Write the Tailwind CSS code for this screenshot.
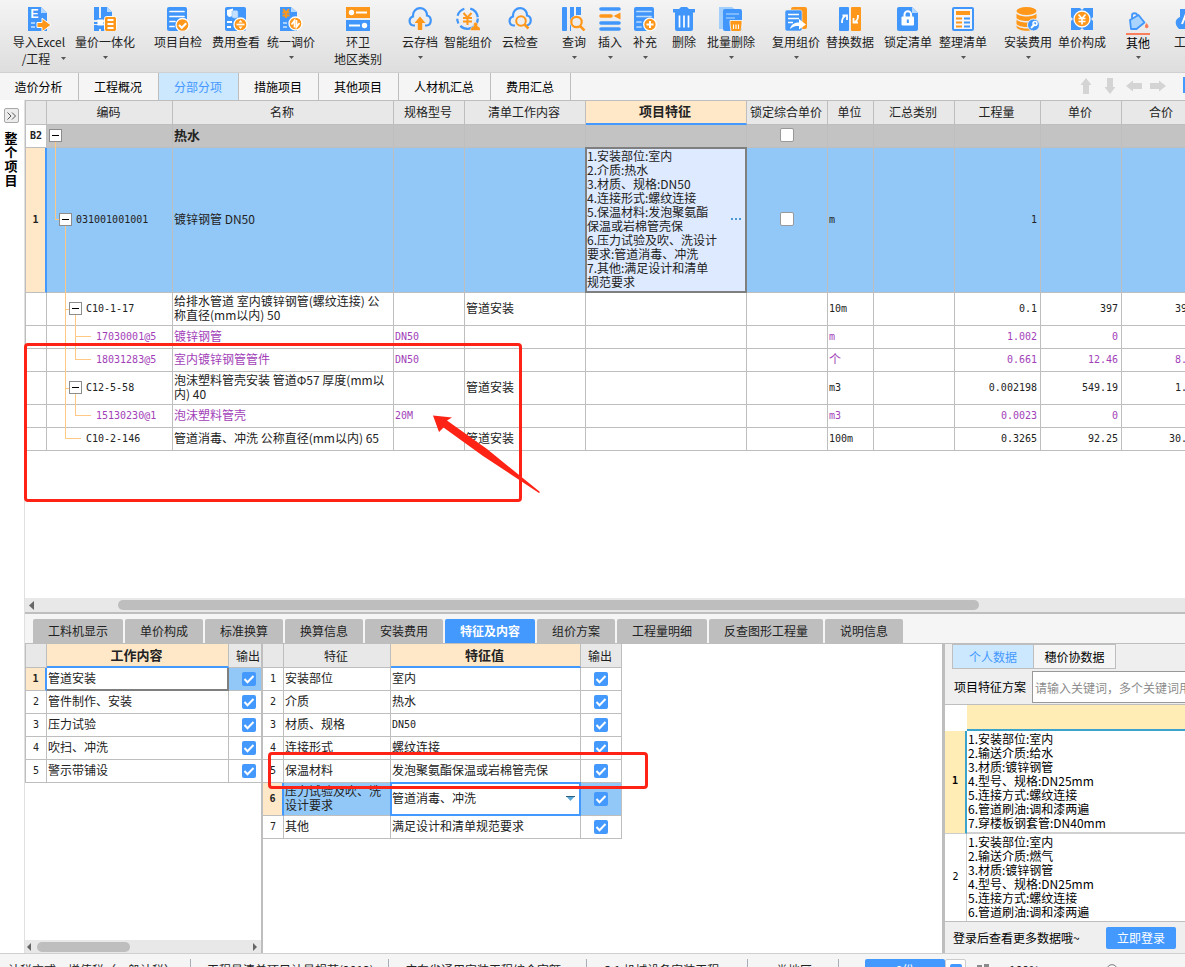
<!DOCTYPE html>
<html lang="zh-CN">
<head>
<meta charset="utf-8">
<title>分部分项</title>
<script src="https://cdn.jsdelivr.net/npm/@tailwindcss/browser@4"></script>
</head>
<body class="relative h-screen overflow-hidden bg-white font-['Noto_Sans_CJK_SC',sans-serif] text-xs leading-[14px] text-[#222]">

<svg class="hidden" aria-hidden="true">
  <symbol id="tick" viewBox="0 0 14 14"><path d="M2.500 7l3 3.200L11.500 4" fill="none" stroke="#fff" stroke-width="2"/></symbol>
  <symbol id="caret" viewBox="0 0 5 3"><path d="M0 0h5L2.500 3z" fill="#555"/></symbol>
</svg>

<div class="flex h-[calc(100vh+18px)] flex-col">

<!-- Ribbon -->
<header class="flex h-[72px] shrink-0 overflow-hidden bg-linear-to-b from-[#f4f4f4] to-[#dedede] pt-[7px] leading-[17px] whitespace-nowrap [&>button]:flex [&>button]:shrink-0 [&>button]:flex-col [&>button]:items-center [&>button]:justify-start [&_svg.ic]:mb-0.5 [&_svg.ic]:size-6 [&_svg.ic]:shrink-0 [&_svg.car]:mt-[6px] [&_svg.car]:h-[3px] [&_svg.car]:w-[5px]">
  <button class="relative ml-3 w-[54px]">
    <svg class="ic" viewBox="0 0 24 24"><path d="M1 0h13l6 6v18H1z" fill="#4096fa"/><path d="M14 0v6h6z" fill="#b5d9ff"/><text x="3.500" y="11" font-family="Liberation Sans" font-weight="700" font-size="12" fill="#fff">E</text><path d="M4 16h4M4 20h4" stroke="#a6d0ff" stroke-width="2"/><path d="M10 15.500h5v-4.300l9 6.800-9 6.800v-4.300h-5z" fill="#ff981a" stroke="#fff" stroke-width="1"/></svg>
    <span>导入Excel</span><span class="pr-1.5">/工程</span>
    <svg class="absolute right-0 bottom-[12px] h-[3px] w-[5px]"><use href="#caret"/></svg>
  </button>
  <button class="ml-[9px] w-[60px]">
    <svg class="ic" viewBox="0 0 24 24"><path d="M1 0h5v13H1zM1 18h5v6H1zM8 0h6l5 5v8H8zM8 18h5v6H8z" fill="#4096fa"/><path d="M14 0v5h5z" fill="#b5d9ff"/><path d="M1 16h12M7 11v11" stroke="#4096fa" stroke-width="2"/><path d="M4.500 12.500h6v6h-6z" fill="#fff"/><rect x="11.500" y="9.500" width="12" height="15" rx="2" fill="#ff981a" stroke="#fff"/><path d="M14.500 13h6M14.500 17h6M14.500 21h6" stroke="#fff" stroke-width="1.800"/></svg>
    <span>量价一体化</span><svg class="car"><use href="#caret"/></svg>
  </button>
  <button class="ml-[19px] w-12">
    <svg class="ic" viewBox="0 0 24 24"><rect x="1" width="20" height="24" rx="2" fill="#4096fa"/><path d="M4 4.500h14M4 9.500h14M4 14.500h5M4 19.500h4" stroke="#fff" stroke-width="1.700" stroke-linecap="round"/><circle cx="16.500" cy="18" r="6.500" fill="#ff981a" stroke="#fff" stroke-width="1.300"/><path d="M13 18l2.800 2.800 4.400-4.600" fill="none" stroke="#fff" stroke-width="2"/></svg>
    <span>项目自检</span>
  </button>
  <button class="ml-2.5 w-12">
    <svg class="ic" viewBox="0 0 24 24"><rect x="1" width="21" height="24" rx="2" fill="#4096fa"/><path d="M3 3l6-1.500V9L5 10 3 8z" fill="#fff"/><path d="M8 4.500c0-1.500 6-1.500 6 0V10c0 1.500-6 1.500-6 0z" fill="#c6e1ff" stroke="#7db8fc" stroke-width=".6"/><path d="M3 15h5M3 20h4" stroke="#fff" stroke-width="2"/><circle cx="16.500" cy="17.500" r="6.500" fill="#ff981a" stroke="#fff" stroke-width="1.300"/><path d="M12.500 17.500h8" stroke="#fff" stroke-width="1.700"/><path d="M14.500 15.500l2-2.500 2 2.500zM14.500 19.500l2 2.500 2-2.500z" fill="#fff"/></svg>
    <span>费用查看</span>
  </button>
  <button class="ml-[7px] w-12">
    <svg class="ic" viewBox="0 0 24 24"><path d="M1 0h11l6 5v19H1z" fill="#4096fa"/><path d="M12 0v5h6z" fill="#b5d9ff"/><path d="M4 2l3 3.500L10 2M7 5v6M3.500 5.500h7M3.500 8.500h7" fill="none" stroke="#ff981a" stroke-width="1.800"/><path d="M4 16h4M4 20h4" stroke="#a6d0ff" stroke-width="2"/><circle cx="16.500" cy="16.500" r="6.500" fill="#ff981a" stroke="#fff" stroke-width="1.300"/><path d="M12.500 17.500l3-4v7M20.500 16l-3 4v-7" fill="none" stroke="#fff" stroke-width="1.700"/></svg>
    <span>统一调价</span><svg class="car"><use href="#caret"/></svg>
  </button>
  <button class="ml-[19px] w-12">
    <svg class="ic" viewBox="0 0 24 24"><path d="M0 0h24v11H0z" fill="#ff981a"/><path d="M0 13h24v11H0z" fill="#4096fa"/><circle cx="5.500" cy="5.500" r="2.700" fill="#fff"/><path d="M10 5.500h11M3 18.500h11" stroke="#fff" stroke-width="2"/><circle cx="18.500" cy="18.500" r="2.700" fill="#fff"/></svg>
    <span>环卫</span><span>地区类别</span>
  </button>
  <button class="ml-5 w-9">
    <svg class="ic" viewBox="0 0 24 24"><path d="M7 18.500H5.500A4.600 4.600 0 0 1 5 9.500C4.500 4 8.500 1 12.500 1.200c4 .2 6.800 3.300 6.500 7.300 5.200 1 5 9.500-.5 10H17" fill="none" stroke="#4096fa" stroke-width="2.200"/><path d="M12 9.500l5.500 6.500h-3.300v7H9.800v-7H6.500z" fill="#ff981a"/></svg>
    <span>云存档</span><svg class="car"><use href="#caret"/></svg>
  </button>
  <button class="ml-1.5 w-12">
    <svg class="ic" viewBox="0 0 24 24"><circle cx="11.500" cy="11.500" r="10.300" fill="none" stroke="#4096fa" stroke-width="2.200" stroke-dasharray="24 3 5 3 10 6 12 2"/><path d="M7.500 6l4 4.500 4-4.500M11.500 10v8M7 11h9M7 14.500h9" fill="none" stroke="#ff981a" stroke-width="2"/><path d="M14.500 23.500c0-4 2.500-3.500 3.500-4.500-2-5 5-5 3.500 0 1 1 3 .5 3 4.500z" fill="#ff981a" stroke="#eee" stroke-width=".5"/></svg>
    <span>智能组价</span>
  </button>
  <button class="ml-2.5 w-9">
    <svg class="ic" viewBox="0 0 24 24"><path d="M7 18.500H5.500A4.600 4.600 0 0 1 5 9.500C4.500 4 8.500 1 12.500 1.200c4 .2 6.800 3.300 6.500 7.300 5.200 1 5 9-.5 10" fill="none" stroke="#4096fa" stroke-width="2.200"/><circle cx="13" cy="14" r="4.800" fill="none" stroke="#ff981a" stroke-width="2"/><path d="M16.500 17.500l4 4" stroke="#ff981a" stroke-width="2.500"/></svg>
    <span>云检查</span>
  </button>
  <button class="ml-6 w-6">
    <svg class="ic" viewBox="0 0 24 24"><rect width="5" height="24" rx="1" fill="#4096fa"/><path d="M8 0h4v11H8zM14 0h5v8h-5z" fill="#4096fa"/><path d="M8 11h1v13H8z" fill="#4096fa"/><circle cx="14.500" cy="15" r="6.600" fill="#ececec"/><circle cx="14.500" cy="15" r="5.200" fill="none" stroke="#ff981a" stroke-width="2.200"/><path d="M18 19l4.500 4.500" stroke="#ff981a" stroke-width="2.500"/></svg>
    <span>查询</span><svg class="car"><use href="#caret"/></svg>
  </button>
  <button class="ml-3 w-6">
    <svg class="ic" viewBox="0 0 24 24"><path d="M3 2h18M3 16h18M3 22h18" stroke="#4096fa" stroke-width="3.600" stroke-linecap="round"/><path d="M3 9h10" stroke="#ff981a" stroke-width="3.600" stroke-linecap="round"/><path d="M22.500 5.500v7L15.500 9z" fill="#ff981a"/></svg>
    <span>插入</span><svg class="car"><use href="#caret"/></svg>
  </button>
  <button class="ml-[11px] w-6">
    <svg class="ic" viewBox="0 0 24 24"><rect x="1" width="20" height="24" rx="2" fill="#4096fa"/><path d="M4 4.500h14M4 9.500h14M4 15h4M4 20h4" stroke="#b9dcff" stroke-width="1.700" stroke-linecap="round"/><circle cx="17" cy="17.500" r="6.300" fill="#ff981a" stroke="#fff" stroke-width="1.300"/><path d="M13.500 17.500h7M17 14v7" stroke="#fff" stroke-width="2"/></svg>
    <span>补充</span><svg class="car"><use href="#caret"/></svg>
  </button>
  <button class="ml-[15px] w-6">
    <svg class="ic" viewBox="0 0 24 24"><path d="M1 2h6l2-2h6l2 2h6v3.500H1zM3 5h18v17a2 2 0 0 1-2 2H5a2 2 0 0 1-2-2z" fill="#4096fa"/><path d="M7.500 8.500v12M12 8.500v12M16.500 8.500v12" stroke="#fff" stroke-width="1.700"/></svg>
    <span>删除</span>
  </button>
  <button class="ml-[11px] w-12">
    <svg class="ic" viewBox="0 0 24 24"><path d="M0 0h13l4 3v19H0z" fill="#a3cffd"/><rect x="4" y="2" width="19" height="22" rx="2" fill="#4096fa"/><path d="M7 7h13M7 11h9" stroke="#b9dcff" stroke-width="1.200"/><path d="M11 13.500h12v3l-1 8H12l-1-8z" fill="#ff981a" stroke="#fff" stroke-width=".8"/><path d="M14.500 17.500v4.500M17 17.500v4.500M19.500 17.500v4.500" stroke="#fff" stroke-width="1.100"/></svg>
    <span>批量删除</span><svg class="car"><use href="#caret"/></svg>
  </button>
  <button class="ml-[17px] w-12">
    <svg class="ic" viewBox="0 0 24 24"><rect x="7" width="16" height="22" rx="2" fill="#ff981a"/><rect x="1" y="3" width="17" height="21" rx="2" fill="#4096fa" stroke="#eee" stroke-width=".6"/><path d="M4 7.500h11M4 11.500h11M4 15.500h5" stroke="#fff" stroke-width="1.300"/><path d="M6 22c1-5 5-6.500 9-6.500V12l7 5.500-7 5V19c-4 0-6 .5-9 3z" fill="#fff"/></svg>
    <span>复用组价</span><svg class="car"><use href="#caret"/></svg>
  </button>
  <button class="ml-1.5 w-12">
    <svg class="ic" viewBox="0 0 24 24"><rect x="1" width="10" height="24" rx="1" fill="#4096fa"/><rect x="13" width="10" height="24" rx="1" fill="#ff981a"/><path d="M4 16c0-4 .5-5 3-7M4.500 8.500H9v4.500M20 8c0 4-.5 5-3 7M20 15.500h-4.500V11" fill="none" stroke="#fff" stroke-width="1.800"/></svg>
    <span>替换数据</span>
  </button>
  <button class="ml-2.5 w-12">
    <svg class="ic" viewBox="0 0 24 24"><path d="M3 0h13l6 6v16a2 2 0 0 1-2 2H3a2 2 0 0 1-2-2V2a2 2 0 0 1 2-2z" fill="#4096fa"/><path d="M16 0v6h6z" fill="#b5d9ff"/><rect x="5.500" y="9.500" width="12.500" height="9" rx="1" fill="#fff"/><path d="M8.500 10V7.500a3.300 3.300 0 0 1 6.600 0V10" fill="none" stroke="#fff" stroke-width="2"/><path d="M11.800 12.500v3.500" stroke="#4096fa" stroke-width="2"/></svg>
    <span>锁定清单</span>
  </button>
  <button class="ml-[7px] w-12">
    <svg class="ic" viewBox="0 0 24 24"><rect x="2" y="1" width="20" height="22" rx="1" fill="#f6f6f6" stroke="#4096fa" stroke-width="2"/><path d="M5 4h14v4H5z" fill="#ff981a"/><path d="M5 11.500h6M5 15.500h6M5 19.500h6" stroke="#ff981a" stroke-width="2"/><path d="M13 11.500h6M13 15.500h6M13 19.500h6" stroke="#4096fa" stroke-width="2"/></svg>
    <span>整理清单</span><svg class="car"><use href="#caret"/></svg>
  </button>
  <button class="ml-[17px] w-12">
    <svg class="ic" viewBox="0 0 24 24"><ellipse cx="10.500" cy="4" rx="10" ry="4" fill="#ff981a"/><path d="M.5 6.500c3 4 17 4 20 0V11c-3 4-17 4-20 0zM.5 12.500c3 4 17 4 20 0V17c-3 4-17 4-20 0zM.5 18.500c3 4 17 4 20 0V20c-2 5-18 5-20 0z" fill="#ff981a"/><circle cx="17.500" cy="18" r="6" fill="#4096fa" stroke="#eee"/><path d="M15 21l4-4" stroke="#fff" stroke-width="2"/><circle cx="19" cy="16.500" r="2" fill="none" stroke="#fff" stroke-width="1.500"/></svg>
    <span>安装费用</span><svg class="car"><use href="#caret"/></svg>
  </button>
  <button class="ml-1.5 w-12">
    <svg class="ic" viewBox="0 0 24 24"><path d="M1 1h9l2 2 2-2h9v9l-2 2 2 2v9h-9l-2-2-2 2H1v-9l2-2-2-2z" fill="#4096fa"/><circle cx="12" cy="12" r="8" fill="#ff981a" stroke="#fff" stroke-width="1.300"/><path d="M8.500 7.500l3.500 4 3.500-4M12 11.500v6M8.500 11.500h7M8.500 14.500h7" fill="none" stroke="#fff" stroke-width="1.600"/></svg>
    <span>单价构成</span>
  </button>
  <button class="ml-5 w-6 text-black">
    <svg class="ic" viewBox="0 0 24 24"><path d="M4 13l8.500-5 6 7.500-8 6.500H5z" fill="#a9d4ff" stroke="#4096fa" stroke-width="1.800" stroke-linejoin="round"/><path d="M6 11V8.500c0-3 5-3 5 0" fill="none" stroke="#4096fa" stroke-width="1.800"/><path d="M20.500 16c1 1.500 2 2.300 2 3.500a1.800 1.800 0 0 1-3.600 0c0-1.200.8-2 1.600-3.500z" fill="#fa7f5c"/></svg>
    <span class="border-t-2 border-[#fa7f5c] leading-[15px]">其他</span><svg class="car"><use href="#caret"/></svg>
  </button>
  <button class="ml-6 w-6">
    <svg class="ic" viewBox="0 0 24 24"><path d="M6 2h16v20H5c-5-5-4-10 1-12z" fill="#4096fa"/><path d="M8 17l4-10" stroke="#fff" stroke-width="2"/></svg>
    <span>工具</span>
  </button>
</header>

<!-- Page tabs -->
<nav class="flex h-7 shrink-0 items-stretch border-t border-[#d0d0d0] bg-[#f5f5f5] text-black [&>button]:border-r [&>button]:border-[#bebebe] [&>button]:pr-px">
  <button class="w-[79px]">造价分析</button>
  <button class="w-20">工程概况</button>
  <button class="w-20 bg-[#cce8ff] text-[#4499ff]">分部分项</button>
  <button class="w-20">措施项目</button>
  <button class="w-20">其他项目</button>
  <button class="w-[92px]">人材机汇总</button>
  <button class="w-20">费用汇总</button>
  <div class="ml-auto flex items-center gap-2 pr-px pb-0.5 text-[#d4d4d4] [&_svg]:size-4">
    <a href="#" aria-label="上移"><svg viewBox="0 0 16 16"><path d="M8 0l5.500 7H11v9H5V7H2.500z" fill="currentColor"/></svg></a>
    <a href="#" aria-label="下移"><svg viewBox="0 0 16 16"><path d="M8 16l5.500-7H11V0H5v9H2.500z" fill="currentColor"/></svg></a>
    <a href="#" aria-label="左移"><svg viewBox="0 0 16 16"><path d="M0 8l7-5.500V5h9v6H7v2.500z" fill="currentColor"/></svg></a>
    <a href="#" aria-label="右移"><svg viewBox="0 0 16 16"><path d="M16 8L9 2.500V5H0v6h9v2.500z" fill="currentColor"/></svg></a>
  </div>
  <div class="mt-1 ml-4 h-4 w-0.5 bg-[#4499ff]"></div>
</nav>

<main class="flex min-h-0 flex-1">
  <!-- Collapsed project tree -->
  <aside class="flex w-[25px] shrink-0 flex-col items-center border-r border-[#e0e0e0] pt-2 pr-0.5 text-black">
    <button aria-label="展开" class="grid size-[15px] place-items-center rounded-xs border border-[#a8a8a8] bg-[#ececec]"><svg class="h-2 w-[9px]" viewBox="0 0 9 8"><path d="M.5.5L4 4 .5 7.500M5 .5L8.500 4 5 7.500" fill="none" stroke="#555"/></svg></button>
    <div class="mt-2 w-[13px] text-[13px] leading-[14px] font-bold break-all">整个项目</div>
  </aside>

  <div class="flex min-w-0 flex-1 flex-col">
    <div class="min-h-0 flex-1 overflow-hidden">
      <table class="w-[1178px] table-fixed border-separate border-spacing-0 [&_.num]:pr-[3px] [&_.num]:pb-0 [&_.num]:text-right [&_.num]:font-['DejaVu_Sans_Mono',monospace] [&_.num]:text-[10px] [&_.code]:font-['DejaVu_Sans_Mono',monospace] [&_.code]:text-[10px] [&_td]:border-r [&_td]:border-b [&_td]:border-[#bebebe] [&_td]:p-0 [&_td]:pb-0.5 [&_td]:pl-px [&_td:first-child]:border-l [&_td:first-child]:pl-0 [&_td:first-child]:text-center [&_th]:border-t [&_th]:border-r [&_th]:border-b [&_th]:border-[#bebebe] [&_th]:p-0 [&_th]:pr-0.5 [&_th]:pb-0.5 [&_th]:font-normal [&_th:first-child]:border-l [&_i]:absolute [&_i]:border-[#ffc983] [&_td>button]:absolute [&_td>button]:size-[13px] [&_td>button]:border [&_td>button]:border-[#8c8c8c] [&_td>button]:bg-white [&_td>button]:bg-linear-to-b [&_td>button]:from-black [&_td>button]:to-black [&_td>button]:bg-[length:7px_1px] [&_td>button]:bg-center [&_td>button]:bg-no-repeat [&_td>button]:top-[calc(50%-7px)]">
        <colgroup><col class="w-[22px]"><col class="w-[126px]"><col class="w-[221px]"><col class="w-[71px]"><col class="w-[121px]"><col class="w-[161px]"><col class="w-[81px]"><col class="w-[46px]"><col class="w-[81px]"><col class="w-[86px]"><col class="w-[81px]"><col class="w-[81px]"></colgroup>
        <thead>
          <tr class="h-[25px] bg-[#e8e8e8]"><th></th><th>编码</th><th>名称</th><th>规格型号</th><th>清单工作内容</th><th class="border-b-2! border-b-[#4499ff]! bg-[#ffe8c8]"><span class="text-[13px] font-bold">项目特征</span></th><th class="whitespace-nowrap">锁定综合单价</th><th>单位</th><th>汇总类别</th><th>工程量</th><th>单价</th><th>合价</th></tr>
        </thead>
        <tbody>
          <tr class="h-[23px] bg-[#c3c3c3]">
            <td class="bg-white"><b class="code">B2</b></td>
            <td class="relative"><i class="top-1/2 -bottom-px left-2 border-l"></i><button aria-label="折叠" class="left-0.5"></button></td>
            <td class="text-[13px] font-bold">热水</td><td></td><td></td><td></td>
            <td class="pr-0.5!"><input type="checkbox" aria-label="锁定综合单价 B2" class="mx-auto block size-[14px] appearance-none rounded-xs border border-[#999] bg-white"></td>
            <td></td><td></td><td></td><td></td><td></td>
          </tr>
          <tr class="h-[145px] bg-[#92c8f7]">
            <td class="border-r-2! border-r-[#4499ff]! bg-[#ffe8c8]"><b class="code">1</b></td>
            <td class="relative"><i class="-top-px left-2 h-[73px] w-1 border-b border-l"></i><i class="top-1/2 -bottom-px left-[18px] border-l"></i><button aria-label="折叠" class="left-3"></button><span class="code pl-7">031001001001</span></td>
            <td>镀锌钢管 DN50</td><td></td><td></td>
            <td class="relative">
              <div class="absolute -inset-px flex items-center border-2 border-[#7f7f7f] bg-[#deeaff] pb-0.5">
                <div class="flex-1 whitespace-nowrap">1.安装部位:室内<br>2.介质:热水<br>3.材质、规格:DN50<br>4.连接形式:螺纹连接<br>5.保温材料:发泡聚氨酯<br>保温或岩棉管壳保<br>6.压力试验及吹、洗设计<br>要求:管道消毒、冲洗<br>7.其他:满足设计和清单<br>规范要求</div>
                <button aria-label="编辑" class="flex w-[14px] gap-0.5"><span class="size-0.5 bg-[#4c97d8]"></span><span class="size-0.5 bg-[#4c97d8]"></span><span class="size-0.5 bg-[#4c97d8]"></span></button>
              </div>
            </td>
            <td class="pr-0.5!"><input type="checkbox" aria-label="锁定综合单价 1" class="mx-auto block size-[14px] appearance-none rounded-xs border border-[#999] bg-white"></td>
            <td><span class="code">m</span></td><td></td><td class="num">1</td><td></td><td></td>
          </tr>
          <tr class="h-[33px]">
            <td></td>
            <td class="relative"><i class="-top-px -bottom-px left-[18px] border-l"></i><i class="top-1/2 left-[18px] w-1 border-t"></i><i class="top-1/2 -bottom-px left-7 border-l"></i><button aria-label="折叠" class="left-[22px]"></button><span class="code pl-[38px]">C10-1-17</span></td>
            <td>给排水管道 室内镀锌钢管(螺纹连接) 公<br>称直径(mm以内) 50</td><td></td><td>管道安装</td><td></td><td></td><td><span class="code">10m</span></td><td></td><td class="num">0.1</td><td class="num">397</td><td class="num">39.7</td>
          </tr>
          <tr class="h-[23px] text-[#a23fb8]">
            <td></td>
            <td class="relative"><i class="-top-px -bottom-px left-[18px] border-l"></i><i class="-top-px -bottom-px left-7 border-l"></i><i class="top-[10px] left-7 w-4 border-t"></i><span class="code pl-12">17030001@5</span></td>
            <td>镀锌钢管</td><td><span class="code">DN50</span></td><td></td><td></td><td></td><td><span class="code">m</span></td><td></td><td class="num">1.002</td><td class="num">0</td><td class="num">0</td>
          </tr>
          <tr class="h-[23px] text-[#a23fb8]">
            <td></td>
            <td class="relative"><i class="-top-px -bottom-px left-[18px] border-l"></i><i class="-top-px left-7 h-3 w-4 border-b border-l"></i><span class="code pl-12">18031283@5</span></td>
            <td>室内镀锌钢管管件</td><td><span class="code">DN50</span></td><td></td><td></td><td></td><td>个</td><td></td><td class="num">0.661</td><td class="num">12.46</td><td class="num">8.24</td>
          </tr>
          <tr class="h-[33px]">
            <td></td>
            <td class="relative"><i class="-top-px -bottom-px left-[18px] border-l"></i><i class="top-1/2 left-[18px] w-1 border-t"></i><i class="top-1/2 -bottom-px left-7 border-l"></i><button aria-label="折叠" class="left-[22px]"></button><span class="code pl-[38px]">C12-5-58</span></td>
            <td>泡沫塑料管壳安装 管道Φ57 厚度(mm以<br>内) 40</td><td></td><td>管道安装</td><td></td><td></td><td><span class="code">m3</span></td><td></td><td class="num">0.002198</td><td class="num">549.19</td><td class="num">1.21</td>
          </tr>
          <tr class="h-[23px] text-[#a23fb8]">
            <td></td>
            <td class="relative"><i class="-top-px -bottom-px left-[18px] border-l"></i><i class="-top-px left-7 h-3 w-4 border-b border-l"></i><span class="code pl-12">15130230@1</span></td>
            <td>泡沫塑料管壳</td><td><span class="code">20M</span></td><td></td><td></td><td></td><td><span class="code">m3</span></td><td></td><td class="num">0.0023</td><td class="num">0</td><td class="num">0</td>
          </tr>
          <tr class="h-[23px]">
            <td></td>
            <td class="relative"><i class="-top-px left-[18px] h-3 w-4 border-b border-l"></i><span class="code pl-[38px]">C10-2-146</span></td>
            <td>管道消毒、冲洗 公称直径(mm以内) 65</td><td></td><td>管道安装</td><td></td><td></td><td><span class="code">100m</span></td><td></td><td class="num">0.3265</td><td class="num">92.25</td><td class="num">30.12</td>
          </tr>
        </tbody>
      </table>
    </div>

    <!-- Horizontal scrollbar -->
    <div class="flex h-[14px] shrink-0 items-center bg-[#e8e8e8] pl-1">
      <svg class="h-[9px] w-[5px]" viewBox="0 0 5 9"><path d="M5 0v9L0 4.500z" fill="#666"/></svg>
      <div class="ml-[84px] h-2.5 w-[861px] rounded-full bg-[#bebebe]"></div>
    </div>

    <section class="flex h-[341px] shrink-0 flex-col border-t-2 border-[#bebebe]">
      <nav class="flex h-[30px] shrink-0 items-end gap-0.5 border-b border-[#bebebe] bg-[#f5f5f5] pl-2 [&>button]:h-6 [&>button]:w-[78px] [&>button]:rounded-t-xs [&>button]:bg-[#bebebe]">
        <button class="w-[90px]!">工料机显示</button>
        <button>单价构成</button>
        <button>标准换算</button>
        <button>换算信息</button>
        <button>安装费用</button>
        <button class="w-[90px]! bg-[#4499ff]! font-bold text-white">特征及内容</button>
        <button>组价方案</button>
        <button class="w-[90px]!">工程量明细</button>
        <button class="w-[114px]!">反查图形工程量</button>
        <button>说明信息</button>
      </nav>

      <div class="flex min-h-0 flex-1">
        <!-- Work items -->
        <div class="flex w-[236px] shrink-0 flex-col justify-between overflow-hidden">
          <table class="w-[245px] table-fixed border-separate border-spacing-0 [&_td]:border-r [&_td]:border-b [&_td]:border-[#bebebe] [&_td]:p-0 [&_td]:pb-0.5 [&_td]:pl-px [&_td:first-child]:border-l [&_td:first-child]:pb-0 [&_td:first-child]:pl-0 [&_td:first-child]:text-center [&_td:first-child]:font-['DejaVu_Sans_Mono',monospace] [&_td:first-child]:text-[10px] [&_td:last-child]:pr-0.5 [&_td:last-child]:pb-0 [&_th]:border-r [&_th]:border-b [&_th]:border-[#bebebe] [&_th]:p-0 [&_th]:pr-0.5 [&_th]:font-normal [&_th:first-child]:border-l [&_input]:block [&_input]:size-[14px] [&_input]:appearance-none [&_input]:rounded-xs [&_input]:bg-[#4499ff] [&_label]:relative [&_label]:mx-auto [&_label]:block [&_label]:w-[14px] [&_svg]:absolute [&_svg]:inset-0 [&_svg]:size-[14px]">
            <colgroup><col class="w-[22px]"><col class="w-[182px]"><col class="w-[41px]"></colgroup>
            <tr class="h-6 bg-[#e8e8e8]"><th></th><th class="border-b-2! border-b-[#4499ff]! bg-[#ffe8c8]"><span class="text-[13px] font-bold">工作内容</span></th><th>输出</th></tr>
            <tr class="h-[23px]"><td class="border-r-2! border-r-[#4499ff]! bg-[#ffe8c8] font-bold">1</td><td class="border-r-2! border-b-2! border-[#7f7f7f]! pb-px!">管道安装</td><td class="bg-[#92c8f7]"><label><input type="checkbox" checked aria-label="输出 管道安装"><svg><use href="#tick"/></svg></label></td></tr>
            <tr class="h-[23px]"><td>2</td><td>管件制作、安装</td><td><label><input type="checkbox" checked aria-label="输出 管件制作、安装"><svg><use href="#tick"/></svg></label></td></tr>
            <tr class="h-[23px]"><td>3</td><td>压力试验</td><td><label><input type="checkbox" checked aria-label="输出 压力试验"><svg><use href="#tick"/></svg></label></td></tr>
            <tr class="h-[23px]"><td>4</td><td>吹扫、冲洗</td><td><label><input type="checkbox" checked aria-label="输出 吹扫、冲洗"><svg><use href="#tick"/></svg></label></td></tr>
            <tr class="h-[23px]"><td>5</td><td>警示带铺设</td><td><label><input type="checkbox" checked aria-label="输出 警示带铺设"><svg><use href="#tick"/></svg></label></td></tr>
          </table>
          <div class="flex h-[13px] items-center bg-[#e8e8e8] pr-1 pl-0.5">
            <svg class="h-2 w-1" viewBox="0 0 4 8"><path d="M4 0v8L0 4z" fill="#666"/></svg>
            <div class="ml-1.5 h-2.5 w-[93px] rounded-full bg-[#bebebe]"></div>
            <svg class="ml-auto h-2 w-1" viewBox="0 0 4 8"><path d="M0 0v8l4-4z" fill="#666"/></svg>
          </div>
        </div>

        <!-- Characteristic values -->
        <div class="min-w-0 flex-1 overflow-hidden border-l-2 border-[#bebebe]">
          <table class="w-[359px] table-fixed border-separate border-spacing-0 [&_td]:border-r [&_td]:border-b [&_td]:border-[#bebebe] [&_td]:p-0 [&_td]:pb-0.5 [&_td]:pl-px [&_td:first-child]:pb-0 [&_td:first-child]:pl-0 [&_td:first-child]:text-center [&_td:first-child]:font-['DejaVu_Sans_Mono',monospace] [&_td:first-child]:text-[10px] [&_td:last-child]:pr-0.5 [&_td:last-child]:pb-0 [&_th]:border-r [&_th]:border-b [&_th]:border-[#bebebe] [&_th]:p-0 [&_th]:pr-0.5 [&_th]:font-normal [&_input]:block [&_input]:size-[14px] [&_input]:appearance-none [&_input]:rounded-xs [&_input]:bg-[#4499ff] [&_label]:relative [&_label]:mx-auto [&_label]:block [&_label]:w-[14px] [&_label>svg]:absolute [&_label>svg]:inset-0 [&_label>svg]:size-[14px]">
            <colgroup><col class="w-[21px]"><col class="w-[107px]"><col class="w-[190px]"><col class="w-[41px]"></colgroup>
            <tr class="h-6 bg-[#e8e8e8]"><th></th><th>特征</th><th class="border-b-2! border-b-[#4499ff]! bg-[#ffe8c8]"><span class="text-[13px] font-bold">特征值</span></th><th>输出</th></tr>
            <tr class="h-[23px]"><td>1</td><td>安装部位</td><td>室内</td><td><label><input type="checkbox" checked aria-label="输出 安装部位"><svg><use href="#tick"/></svg></label></td></tr>
            <tr class="h-[23px]"><td>2</td><td>介质</td><td>热水</td><td><label><input type="checkbox" checked aria-label="输出 介质"><svg><use href="#tick"/></svg></label></td></tr>
            <tr class="h-[23px]"><td>3</td><td>材质、规格</td><td><span class="font-['DejaVu_Sans_Mono',monospace] text-[10px]">DN50</span></td><td><label><input type="checkbox" checked aria-label="输出 材质、规格"><svg><use href="#tick"/></svg></label></td></tr>
            <tr class="h-[23px]"><td>4</td><td>连接形式</td><td>螺纹连接</td><td><label><input type="checkbox" checked aria-label="输出 连接形式"><svg><use href="#tick"/></svg></label></td></tr>
            <tr class="h-[23px]"><td>5</td><td>保温材料</td><td>发泡聚氨酯保温或岩棉管壳保</td><td><label><input type="checkbox" checked aria-label="输出 保温材料"><svg><use href="#tick"/></svg></label></td></tr>
            <tr class="h-[33px]"><td class="border-r-2! border-r-[#4499ff]! bg-[#ffe8c8] font-bold">6</td><td class="bg-[#92c8f7]">压力试验及吹、洗<br>设计要求</td>
              <td class="relative"><div class="absolute -inset-px border-2 border-[#4499ff] bg-white"><select aria-label="压力试验及吹、洗设计要求" class="block size-full appearance-none bg-transparent pb-0.5"><option>管道消毒、冲洗</option></select><svg class="pointer-events-none absolute top-3 right-1 h-[5px] w-[9px]" viewBox="0 0 9 5"><path d="M0 0h9L4.500 5z" fill="#5ba7d8"/><path d="M0 .5h9" stroke="#27607f"/></svg></div></td>
              <td class="bg-[#92c8f7]"><label><input type="checkbox" checked aria-label="输出 压力试验及吹、洗设计要求"><svg><use href="#tick"/></svg></label></td></tr>
            <tr class="h-[23px]"><td>7</td><td>其他</td><td>满足设计和清单规范要求</td><td><label><input type="checkbox" checked aria-label="输出 其他"><svg><use href="#tick"/></svg></label></td></tr>
          </table>
        </div>

        <!-- Data panel -->
        <aside class="flex w-[243px] shrink-0 flex-col overflow-hidden border-l-3 border-[#bebebe] bg-[#efefef] text-black">
          <div class="flex pl-[7px] [&>button]:h-[25px] [&>button]:w-[82px] [&>button]:border [&>button]:border-[#bebebe]">
            <button class="bg-[#cce8ff] text-[#4499ff]">个人数据</button>
            <button class="border-l-0! bg-[#f5f5f5]">穗价协数据</button>
          </div>
          <div class="flex items-center gap-[6px] pt-0.5 pb-px pl-[9px] whitespace-nowrap">
            <label for="kw" class="shrink-0">项目特征方案</label>
            <input id="kw" type="text" placeholder="请输入关键词，多个关键词用空格隔开" class="h-8 w-[220px] shrink-0 border border-[#999] bg-white pl-0.5 placeholder:text-[#8c8c8c]">
          </div>
          <div class="min-h-0 flex-1 overflow-hidden border-y border-[#bebebe] bg-white">
            <table class="w-[300px] table-fixed border-separate border-spacing-0 [&_td]:p-0 [&_td]:pb-0.5 [&_th]:p-0">
              <colgroup><col class="w-[22px]"><col></colgroup>
              <tr class="h-[26px]"><th></th><th class="border-b-2 border-[#3ba3cc] bg-[#ffedb5]"></th></tr>
              <tr class="h-[103px]"><td class="border-r-2 border-b border-r-[#3ba3cc] border-b-[#ccc] bg-[#ffedb5] text-center font-['DejaVu_Sans_Mono',monospace] text-[10px] font-bold">1</td><td class="border-b-2 border-[#d0d0d0] pl-px!">1.安装部位:室内<br>2.输送介质:给水<br>3.材质:镀锌钢管<br>4.型号、规格:DN25mm<br>5.连接方式:螺纹连接<br>6.管道刷油:调和漆两遍<br>7.穿楼板钢套管:DN40mm</td></tr>
              <tr class="h-[87px]"><td class="border-r border-[#d0d0d0] text-center font-['DejaVu_Sans_Mono',monospace] text-[10px]">2</td><td class="pl-px!">1.安装部位:室内<br>2.输送介质:燃气<br>3.材质:镀锌钢管<br>4.型号、规格:DN25mm<br>5.连接方式:螺纹连接<br>6.管道刷油:调和漆两遍</td></tr>
            </table>
          </div>
          <div class="flex h-[31px] shrink-0 items-center justify-between pr-[9px] pl-2">
            <span>登录后查看更多数据哦~</span>
            <button class="h-[22px] w-[70px] rounded-xs bg-[#4499ff] text-white">立即登录</button>
          </div>
        </aside>
      </div>
    </section>
  </div>
</main>

<!-- Status bar -->
<footer class="flex h-8 shrink-0 items-center overflow-hidden border-t border-[#d0d0d0] bg-[#f5f5f5] whitespace-nowrap [&>span]:shrink-0 [&>span]:border-r [&>span]:border-[#a8adb8] [&>span]:py-1">
  <span class="w-[191px] pl-2">计税方式：增值税（一般计税）</span>
  <span class="w-[198px] pl-4">工程量清单项目计量规范(2013)</span>
  <span class="w-[198px] pl-4">广东省通用安装工程综合定额</span>
  <span class="w-[161px] pl-4">C.1 机械设备安装工程</span>
  <span class="w-[91px] pl-4">一类地区</span>
  <button class="ml-[26px] h-[22px] w-20 shrink-0 rounded-xs bg-[#4499ff] text-white">0份</button>
  <button aria-label="视图" class="grid h-[22px] w-[21px] shrink-0 place-items-center rounded-xs border border-[#ccc] bg-white"><svg class="size-3" viewBox="0 0 12 12"><rect width="12" height="12" rx="2" fill="#4499ff"/></svg></button>
  <svg class="ml-[11px] size-3 shrink-0" viewBox="0 0 12 12"><path d="M0 1h5v4H0zM7 0h5v5H7zM0 7h5v5H0zM7 7h5v5H7z" fill="#8a8a8a"/></svg>
  <b class="ml-5 shrink-0 font-normal">100%</b>
  <svg class="ml-[66px] size-3 shrink-0" viewBox="0 0 12 12"><circle cx="6" cy="6" r="5.300" fill="#fff" stroke="#777"/></svg>
</footer>
</div>

<!-- Markup drawn over the window -->
<div class="pointer-events-none absolute top-[343px] left-6 h-[159px] w-[498px] rounded-sm border-3 border-[#ff2316]"></div>
<div class="pointer-events-none absolute top-[752px] left-[268px] h-[37px] w-[380px] rounded-sm border-3 border-[#ff2316]"></div>
<svg class="pointer-events-none absolute top-[415px] left-[433px] h-[79px] w-[108px]" viewBox="0 0 108 79"><path d="M0 .5L19 2.500l-5 3L54 34l53 43-1 1L50 41 10.500 12.500 6 17z" fill="#ff2316"/></svg>
</body>
</html>
